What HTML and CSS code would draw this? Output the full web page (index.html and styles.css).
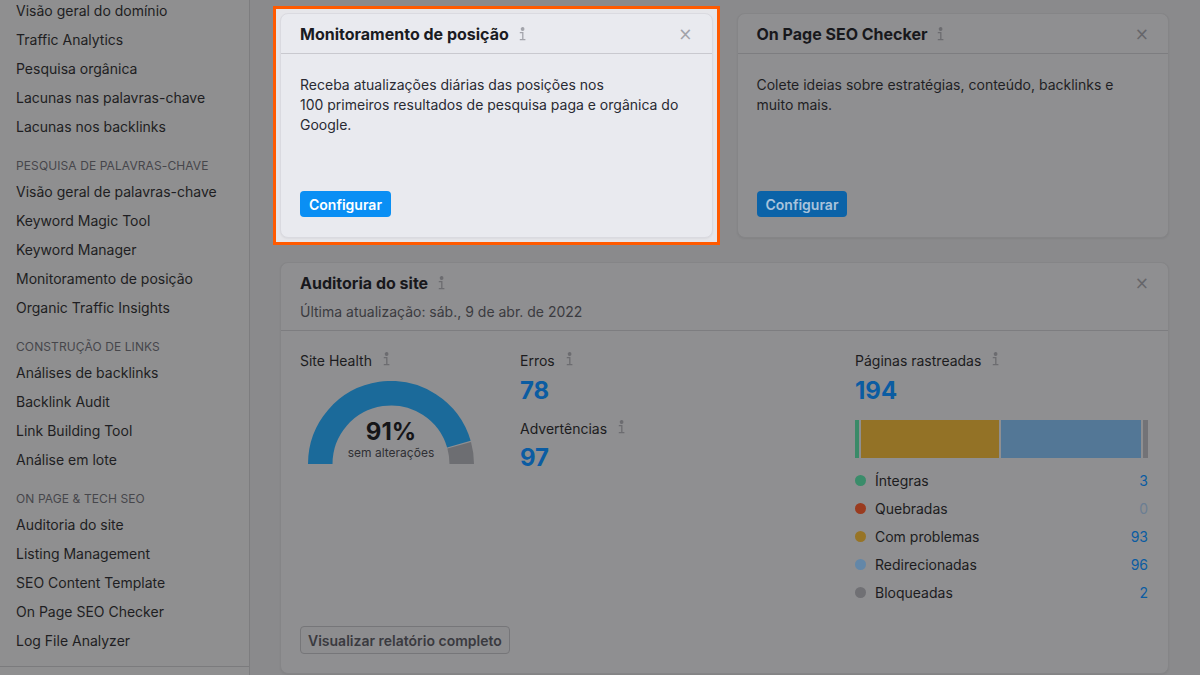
FILE: index.html
```html
<!DOCTYPE html>
<html lang="pt-BR">
<head>
<meta charset="utf-8">
<title>Projetos</title>
<link rel="stylesheet" href="styles.css">
</head>
<body>
<div class="app">
  <aside class="sidebar">
    <ul class="nav">
      <li>Visão geral do domínio</li>
      <li>Traffic Analytics</li>
      <li>Pesquisa orgânica</li>
      <li>Lacunas nas palavras-chave</li>
      <li>Lacunas nos backlinks</li>
    </ul>
    <div class="nav-head">PESQUISA DE PALAVRAS-CHAVE</div>
    <ul class="nav">
      <li>Visão geral de palavras-chave</li>
      <li>Keyword Magic Tool</li>
      <li>Keyword Manager</li>
      <li>Monitoramento de posição</li>
      <li>Organic Traffic Insights</li>
    </ul>
    <div class="nav-head">CONSTRUÇÃO DE LINKS</div>
    <ul class="nav">
      <li>Análises de backlinks</li>
      <li>Backlink Audit</li>
      <li>Link Building Tool</li>
      <li>Análise em lote</li>
    </ul>
    <div class="nav-head">ON PAGE &amp; TECH SEO</div>
    <ul class="nav">
      <li>Auditoria do site</li>
      <li>Listing Management</li>
      <li>SEO Content Template</li>
      <li>On Page SEO Checker</li>
      <li>Log File Analyzer</li>
    </ul>
    <div class="sidebar-foot"></div>
  </aside>

  <main class="main">
    <div class="spotlight">
      <section class="card card-lit">
        <header class="card-head">
          <h2 class="card-title">Monitoramento de posição
            <svg class="info" viewBox="0 0 8 14" width="8" height="14"><circle cx="4.6" cy="2" r="1.25"/><path d="M1.8 5.6H4.8V12.6M1.8 12.6H7.4"/></svg>
          </h2>
          <span class="close">×</span>
        </header>
        <div class="card-body">
          <p class="desc">Receba atualizações diárias das posições nos<br>100 primeiros resultados de pesquisa paga e orgânica do Google.</p>
          <button class="btn-primary">Configurar</button>
        </div>
      </section>
    </div>

    <section class="card card-dim">
      <header class="card-head">
        <h2 class="card-title">On Page SEO Checker
          <svg class="info" viewBox="0 0 8 14" width="8" height="14"><circle cx="4.6" cy="2" r="1.25"/><path d="M1.8 5.6H4.8V12.6M1.8 12.6H7.4"/></svg>
        </h2>
        <span class="close">×</span>
      </header>
      <div class="card-body">
        <p class="desc">Colete ideias sobre estratégias, conteúdo, backlinks e muito mais.</p>
        <button class="btn-primary">Configurar</button>
      </div>
    </section>

    <section class="card card-dim audit">
      <header class="card-head audit-head">
        <div>
          <h2 class="card-title">Auditoria do site
            <svg class="info" viewBox="0 0 8 14" width="8" height="14"><circle cx="4.6" cy="2" r="1.25"/><path d="M1.8 5.6H4.8V12.6M1.8 12.6H7.4"/></svg>
          </h2>
          <div class="updated">Última atualização: sáb., 9 de abr. de 2022</div>
        </div>
        <span class="close">×</span>
      </header>
      <div class="audit-body">
        <div class="audit-cols">
          <div class="col">
            <div class="label">Site Health
              <svg class="info" viewBox="0 0 8 14" width="8" height="14"><circle cx="4.6" cy="2" r="1.25"/><path d="M1.8 5.6H4.8V12.6M1.8 12.6H7.4"/></svg>
            </div>
            <div class="gauge">
              <svg viewBox="0 0 166 83" width="166" height="83">
                <path class="g-blue" d="M12.25 83 A70.75 70.75 0 0 1 150.9 63.1"/>
                <path class="g-grey" d="M151.2 64.3 A70.75 70.75 0 0 1 153.75 83"/>
              </svg>
              <div class="gauge-text">
                <div class="gauge-val">91%</div>
                <div class="gauge-sub">sem alterações</div>
              </div>
            </div>
          </div>
          <div class="col">
            <div class="label">Erros
              <svg class="info" viewBox="0 0 8 14" width="8" height="14"><circle cx="4.6" cy="2" r="1.25"/><path d="M1.8 5.6H4.8V12.6M1.8 12.6H7.4"/></svg>
            </div>
            <div class="big">78</div>
            <div class="label label-gap">Advertências
              <svg class="info" viewBox="0 0 8 14" width="8" height="14"><circle cx="4.6" cy="2" r="1.25"/><path d="M1.8 5.6H4.8V12.6M1.8 12.6H7.4"/></svg>
            </div>
            <div class="big big-tight">97</div>
          </div>
          <div class="col">
            <div class="label">Páginas rastreadas
              <svg class="info" viewBox="0 0 8 14" width="8" height="14"><circle cx="4.6" cy="2" r="1.25"/><path d="M1.8 5.6H4.8V12.6M1.8 12.6H7.4"/></svg>
            </div>
            <div class="big">194</div>
            <div class="bar">
              <span class="seg s-green" style="flex-grow:4"></span>
              <span class="seg s-gold" style="flex-grow:138"></span>
              <span class="seg s-blue" style="flex-grow:141"></span>
              <span class="seg s-grey" style="flex-grow:5"></span>
            </div>
            <ul class="legend">
              <li><span class="dot d-green"></span><span class="lg-name">Íntegras</span><span class="lg-val">3</span></li>
              <li><span class="dot d-red"></span><span class="lg-name">Quebradas</span><span class="lg-val zero">0</span></li>
              <li><span class="dot d-gold"></span><span class="lg-name">Com problemas</span><span class="lg-val">93</span></li>
              <li><span class="dot d-blue"></span><span class="lg-name">Redirecionadas</span><span class="lg-val">96</span></li>
              <li><span class="dot d-grey"></span><span class="lg-name">Bloqueadas</span><span class="lg-val">2</span></li>
            </ul>
          </div>
        </div>
        <button class="btn-outline">Visualizar relatório completo</button>
      </div>
    </section>
  </main>
</div>
</body>
</html>
```

FILE: styles.css
```css
* { box-sizing: border-box; }

html, body {
  margin: 0;
  padding: 0;
  height: 100%;
  overflow: hidden;
}

body {
  background: #8a8a8c;
  font-family: Inter, "Noto Sans", "Liberation Sans", sans-serif;
  color: #1c1c20;
  font-size: 14px;
}

.app {
  display: flex;
  height: 675px;
}

/* Sidebar */
.sidebar {
  width: 250px;
  flex: 0 0 250px;
  background: #8f8f90;
  border-right: 1px solid #7d7d7f;
  overflow: hidden;
}

.nav {
  list-style: none;
  margin: 0;
  padding: 0;
}

.sidebar > .nav:first-child {
  margin-top: -4px;
}

.nav li {
  height: 29px;
  line-height: 29px;
  padding-left: 16px;
  font-size: 14px;
  color: #1e1e22;
  white-space: nowrap;
}

.nav-head {
  height: 36px;
  padding: 15px 0 0 16px;
  line-height: 20px;
  font-size: 12px;
  color: #46464b;
  letter-spacing: 0.1px;
}

.sidebar-foot {
  margin-top: 11px;
  border-top: 1px solid #7b7b7d;
}

/* Main */
.main {
  flex: 1;
  padding: 13px 31px 0 30px;
  display: grid;
  grid-template-columns: 1fr 1fr;
  grid-template-rows: 225px auto;
  column-gap: 24px;
  row-gap: 24px;
  align-content: start;
}

.card {
  border-radius: 8px;
  display: flex;
  flex-direction: column;
}

.card-dim {
  background: #8f8f91;
  border: 1px solid #858587;
  box-shadow: 0 1px 2px rgba(0, 0, 0, 0.06);
}

.spotlight {
  margin: -7px;
  border: 3px solid #ff5a00;
  padding: 4px;
  background: #e6e6ea;
  display: flex;
}

.card-lit {
  flex: 1;
  background: #e9eaef;
  border: 1px solid #dadae0;
  box-shadow: 0 1px 2px rgba(0, 0, 0, 0.05);
}

.card-head {
  display: flex;
  justify-content: space-between;
  align-items: flex-start;
  padding: 9px 20px 8px 19px;
  border-bottom: 1px solid #7d7d80;
}

.card-lit .card-head {
  border-bottom-color: #c9c9cf;
}

.card-title {
  margin: 0;
  font-size: 16px;
  line-height: 22px;
  font-weight: 700;
  color: #18181c;
  display: flex;
  align-items: center;
  gap: 9px;
}

.card-lit .card-title { color: #1a1b22; }

.info {
  fill: #6c6c70;
  stroke: #6c6c70;
  stroke-width: 1.3;
  flex: 0 0 auto;
}

.info path { fill: none; }

.card-lit .info {
  fill: #a3a4ab;
  stroke: #a3a4ab;
}

.close {
  font-size: 17px;
  line-height: 22px;
  color: #66666a;
  margin-right: -1px;
  font-family: "DejaVu Sans", sans-serif;
}

.card-lit .close { color: #a2a3aa; }

.card-body {
  flex: 1;
  padding: 21px 20px 20px 19px;
  display: flex;
  flex-direction: column;
  justify-content: space-between;
  align-items: flex-start;
}

.desc {
  margin: 0;
  font-size: 14px;
  line-height: 20px;
  color: #1f1f24;
}

.card-lit .desc { color: #2a2b33; }

.btn-primary {
  border: none;
  border-radius: 4px;
  height: 26px;
  padding: 0 9px;
  font-family: inherit;
  font-size: 14px;
  font-weight: 600;
  color: #a9c3dc;
  background: #0b63a8;
}

.card-lit .btn-primary {
  background: #0a8ff4;
  color: #ffffff;
}

/* Audit card */
.audit {
  grid-column: 1 / span 2;
  height: 412px;
}

.audit-head {
  padding: 9px 20px 8px 19px;
}

.updated {
  margin-top: 8px;
  line-height: 20px;
  font-size: 14px;
  color: #3b3b40;
}

.audit-body {
  padding: 20px 20px 0 19px;
}

.audit-cols {
  display: grid;
  grid-template-columns: 220px 335px 1fr;
}

.label {
  display: flex;
  align-items: center;
  gap: 10px;
  line-height: 20px;
  font-size: 14px;
  color: #1c1c20;
}

.label .info { margin-top: -4px; }

.label-gap { margin-top: 12px; }

.big {
  margin-top: 4px;
  font-size: 24px;
  line-height: 32px;
  font-weight: 700;
  color: #0b5ca2;
}

.big-tight { margin-top: 3px; }

.gauge {
  position: relative;
  width: 166px;
  height: 83px;
  margin: 10px 0 0 8px;
}

.gauge svg { display: block; }

.g-blue {
  fill: none;
  stroke: #1b6a9a;
  stroke-width: 24.5;
}

.g-grey {
  fill: none;
  stroke: #6d6e72;
  stroke-width: 24.5;
}

.gauge-text {
  position: absolute;
  left: 0;
  right: 0;
  bottom: 3px;
  text-align: center;
}

.gauge-val {
  font-size: 24px;
  line-height: 28px;
  font-weight: 700;
  color: #151518;
}

.gauge-sub {
  font-size: 12px;
  line-height: 16px;
  color: #2f2f34;
  margin-top: -1px;
}

.bar {
  margin-top: 13px;
  height: 38px;
  display: flex;
  gap: 2px;
}

.seg { flex-basis: 0; }
.s-green { background: #3a8a68; }
.s-gold  { background: #937226; }
.s-blue  { background: #537796; }
.s-grey  { background: #737377; }

.legend {
  list-style: none;
  margin: 8px 0 0;
  padding: 0;
}

.legend li {
  height: 28px;
  display: flex;
  align-items: center;
  font-size: 14px;
  color: #1c1c20;
}

.dot {
  width: 11px;
  height: 11px;
  border-radius: 50%;
  margin: 0 9px 0 0;
  flex: 0 0 11px;
}

.d-green { background: #3a8c6a; }
.d-red   { background: #9a3b1f; }
.d-gold  { background: #977426; }
.d-blue  { background: #6387a8; }
.d-grey  { background: #707074; }

.lg-name { flex: 1; }

.lg-val {
  color: #0b5ca2;
}

.lg-val.zero { color: #6b7e93; }

.btn-outline {
  margin-top: 20px;
  height: 28px;
  padding: 0 7px;
  border: 1px solid #767679;
  border-radius: 4px;
  background: #8d8d8f;
  font-family: inherit;
  font-size: 14px;
  font-weight: 600;
  color: #3a3a3f;
}
```
